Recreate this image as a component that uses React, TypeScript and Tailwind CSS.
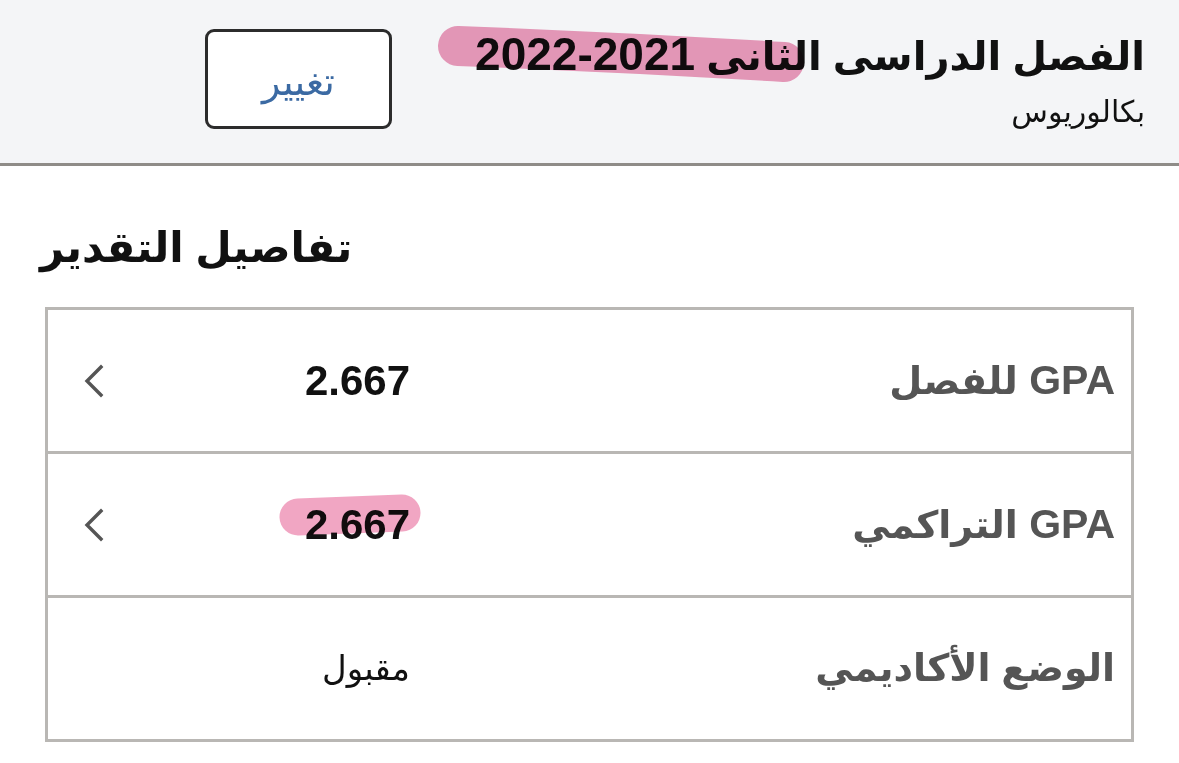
import React from "react";

const font = { fontFamily: '"Liberation Sans", "DejaVu Sans", sans-serif' };

function Chevron() {
  return (
    <svg width="22" height="34" viewBox="0 0 22 34" fill="none">
      <path d="M18 3 L4 17 L18 31" stroke="#555" strokeWidth="3.4" strokeLinecap="square" />
    </svg>
  );
}

type Row = { tag?: string; label: string; value: string; bold?: boolean; chevron?: boolean };

const rows: Row[] = [
  { tag: "GPA", label: "للفصل", value: "2.667", bold: true, chevron: true },
  { tag: "GPA", label: "التراكمي", value: "2.667", bold: true, chevron: true },
  { label: "الوضع الأكاديمي", value: "مقبول" },
];

export default function App() {
  return (
    <div dir="rtl" className="relative w-[1179px] h-[763px] bg-white overflow-hidden" style={font}>
      {/* term header */}
      <header className="h-[166px] bg-[#f4f5f7] border-b-[3px] border-[#8f8c88] flex items-start justify-between pr-[34px] pl-[205px]">
        <div className="pt-[26px]">
          <h1 className="text-[40px] font-bold leading-[56px] text-[#111]">
            الفصل الدراسى الثانى <span className="text-[46px]">2021-2022</span>
          </h1>
          <p className="text-[30px] leading-[40px] text-[#111] mt-[8px]">بكالوريوس</p>
        </div>
        <button className="mt-[29px] w-[187px] h-[100px] bg-white border-[3px] border-[#2c2c2c] rounded-[9px] text-[38px] text-[#3b6aa3] flex items-center justify-center pt-[6px]">
          تغيير
        </button>
      </header>

      {/* grade details */}
      <div className="flex justify-end pl-[40px] pt-[52px]">
        <h2 className="text-[42px] font-bold leading-[60px] text-[#111]">تفاصيل التقدير</h2>
      </div>

      <div className="mx-[45px] mt-[29px] border-[3px] border-[#b9b7b4]">
        {rows.map((r, i) => (
          <div
            key={i}
            className={`h-[141px] flex items-center ${i > 0 ? "h-[144px] border-t-[3px] border-[#b9b7b4]" : ""}`}
          >
            <div className="flex-1 pr-[16px] text-[38px] font-bold text-[#555]">
              {r.tag ? <span className="text-[41px]">{r.tag} </span> : null}
              {r.label}
            </div>
            <div
              className={`w-[290px] text-right ${
                r.bold ? "text-[42px] font-bold text-[#111]" : "text-[34px] text-[#111]"
              }`}
            >
              {r.value}
            </div>
            <div className="w-[72px] flex justify-end pl-[35px]">{r.chevron ? <Chevron /> : null}</div>
          </div>
        ))}
      </div>

      {/* highlighter marks */}
      <svg className="absolute inset-0 pointer-events-none mix-blend-multiply" width="1179" height="763">
        <path d="M458 46 Q620 52 784 62" stroke="#e883ab" strokeOpacity="0.8" strokeWidth="40" strokeLinecap="round" fill="none" />
        <path d="M298 517 L402 513" stroke="#ef9cbd" strokeOpacity="0.9" strokeWidth="37" strokeLinecap="round" fill="none" />
      </svg>
    </div>
  );
}
